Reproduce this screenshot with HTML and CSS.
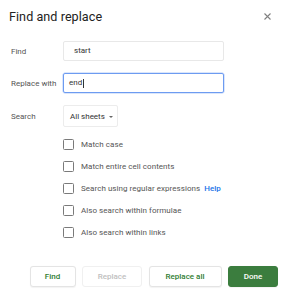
FILE: index.html
```html
<!DOCTYPE html>
<html lang="en">
<head>
<meta charset="utf-8">
<title>Find and replace</title>
<link rel="stylesheet" href="styles.css">
</head>
<body>
  <div class="dialog">
    <div class="header">
      <h1 class="title">Find and replace</h1>
      <button class="close" title="Close">
        <svg width="7" height="7" viewBox="0 0 7 7"><path d="M0.5 0.5L6.5 6.5M6.5 0.5L0.5 6.5" stroke="#808080" stroke-width="1.1"/></svg>
      </button>
    </div>

    <div class="form">
      <label class="label">Find</label>
      <div class="input find">start</div>

      <label class="label">Replace with</label>
      <div class="input replace focused">end<span class="caret"></span></div>

      <label class="label">Search</label>
      <div class="field">
        <div class="select">All sheets <span class="arrow"></span></div>
      </div>
    </div>

    <ul class="options">
      <li><span class="box"></span>Match case</li>
      <li><span class="box"></span>Match entire cell contents</li>
      <li><span class="box"></span>Search using regular expressions <a class="help" href="#help">Help</a></li>
      <li><span class="box"></span>Also search within formulae</li>
      <li><span class="box"></span>Also search within links</li>
    </ul>

    <div class="buttons">
      <button class="btn find-btn">Find</button>
      <button class="btn replace-btn" disabled>Replace</button>
      <button class="btn replace-all-btn">Replace all</button>
      <button class="btn done-btn">Done</button>
    </div>
  </div>
</body>
</html>
```

FILE: styles.css
```css
* {
  margin: 0;
  padding: 0;
  box-sizing: border-box;
}

body {
  margin: 0;
  background: #fff;
  font-family: Roboto, "Liberation Sans", Arial, sans-serif;
  color: #444;
}

.dialog {
  width: 291px;
  height: 300px;
}

.header {
  display: flex;
  justify-content: space-between;
  align-items: center;
  padding: 8px 20px 0 9px;
  height: 25px;
}

.title {
  font-size: 12.6px;
  font-weight: 400;
  line-height: 16px;
  color: #222;
  letter-spacing: 0.05px;
}

.close {
  border: 0;
  background: transparent;
  width: 7px;
  height: 7px;
  display: flex;
  cursor: pointer;
}

/* label / field grid */
.form {
  display: grid;
  grid-template-columns: 52px 161px;
  row-gap: 12px;
  align-items: center;
  padding-left: 11px;
  margin-top: 16px;
}

.label {
  font-size: 8px;
  color: #555;
}

.input {
  height: 20px;
  border: 1px solid #e8e8e8;
  border-radius: 2px;
  font-size: 8px;
  line-height: 18px;
  color: #333;
  display: flex;
  align-items: center;
}

.input.find {
  padding-left: 10px;
}

.input.replace {
  padding-left: 5px;
}

.input.focused {
  border: 1.5px solid #6d9bf1;
  box-shadow: 0 0 0 0.5px #b6cdf8;
}

.caret {
  display: inline-block;
  width: 1px;
  height: 9px;
  background: #333;
  margin-left: 0.5px;
}

.field {
  display: flex;
}

.select {
  height: 22px;
  width: 55px;
  border: 1px solid #ececec;
  border-radius: 2px;
  font-size: 8px;
  color: #333;
  padding-left: 6px;
  display: flex;
  align-items: center;
  gap: 4px;
}

.arrow {
  width: 0;
  height: 0;
  border-left: 2.5px solid transparent;
  border-right: 2.5px solid transparent;
  border-top: 2.5px solid #666;
  margin-top: 1px;
}

/* checkboxes */
.options {
  list-style: none;
  padding-left: 63px;
  margin-top: 6px;
}

.options li {
  display: flex;
  align-items: center;
  height: 22px;
  font-size: 8px;
  color: #555;
  letter-spacing: 0.05px;
}

.box {
  width: 11px;
  height: 11px;
  border: 1.4px solid #7a7a7a;
  border-radius: 1.5px;
  margin-right: 7px;
  flex: none;
}

.help {
  color: #1a73e8;
  text-decoration: none;
  font-weight: 500;
  margin-left: 4px;
}

/* footer buttons */
.buttons {
  display: flex;
  justify-content: flex-end;
  gap: 6.5px;
  padding-right: 13px;
  margin-top: 23px;
}

.btn {
  height: 21px;
  border: 1px solid #e4e4e4;
  border-radius: 3px;
  background: #fff;
  font-family: Roboto, "Liberation Sans", Arial, sans-serif;
  font-size: 8px;
  font-weight: 500;
  color: #2e7d32;
  cursor: pointer;
  box-shadow: 0 0.5px 1px rgba(0,0,0,0.05);
}

.find-btn { width: 46px; }
.replace-btn { width: 60px; }
.replace-all-btn { width: 73px; }
.done-btn { width: 50px; }

.btn[disabled] {
  color: #c0c0c0;
  border-color: #f0f0f0;
  box-shadow: none;
  cursor: default;
}

.done-btn {
  background: #3b7d3e;
  border-color: #3b7d3e;
  color: #fff;
}
```
